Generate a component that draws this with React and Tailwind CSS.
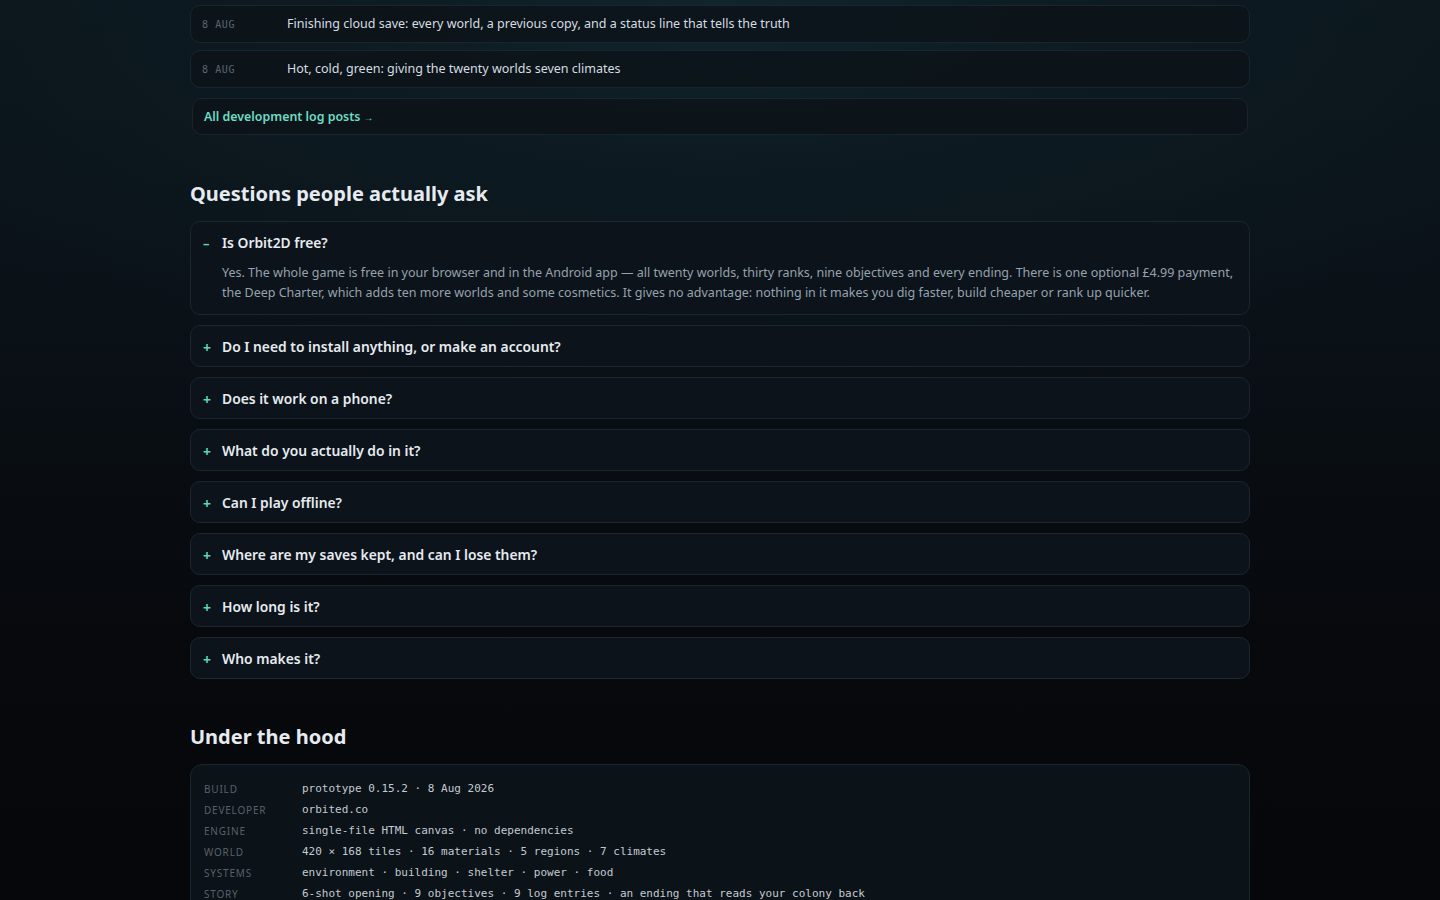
import React from "react";

const sans = { fontFamily: '"Noto Sans", "Open Sans", sans-serif' };

const logs = [
  "Finishing cloud save: every world, a previous copy, and a status line that tells the truth",
  "Hot, cold, green: giving the twenty worlds seven climates",
];

const faqs = [
  "Do I need to install anything, or make an account?",
  "Does it work on a phone?",
  "What do you actually do in it?",
  "Can I play offline?",
  "Where are my saves kept, and can I lose them?",
  "How long is it?",
  "Who makes it?",
];

const hood = [
  ["Build", "prototype 0.15.2 · 8 Aug 2026"],
  ["Developer", "orbited.co"],
  ["Engine", "single-file HTML canvas · no dependencies"],
  ["World", "420 × 168 tiles · 16 materials · 5 regions · 7 climates"],
  ["Systems", "environment · building · shelter · power · food"],
  ["Story", "6-shot opening · 9 objectives · 9 log entries · an ending that reads your colony back"],
];

export default function App() {
  return (
    <div
      className="h-screen w-full overflow-hidden bg-[radial-gradient(ellipse_70%_45%_at_50%_0%,#11252d_0%,#0d1a21_40%,transparent_100%),linear-gradient(180deg,#0b151b_0%,#0a1117_35%,#07090d_70%,#06070a_100%)]"
      style={sans}
    >
      <div className="mx-auto w-[1060px] pt-[5px]">
        <div className="flex flex-col gap-[7px]">
          {logs.map((t) => (
            <div
              key={t}
              className="flex h-[38px] items-center rounded-[10px] border border-[#19252e] bg-[#0c141a]/90 px-[11px]"
            >
              <span className="w-[85px] shrink-0 font-['DejaVu_Sans_Mono',monospace] text-[10px] tracking-[0.06em] text-[#5a6670]">
                8 AUG
              </span>
              <span className="text-[12.5px] text-[#d6dce2]">{t}</span>
            </div>
          ))}
        </div>
        <div className="mx-[2px] mt-[10px] flex h-[37px] items-center rounded-[10px] border border-[#19252e] bg-[#0c141a]/90 px-[11px] pt-[1px]">
          <span className="text-[12.4px] font-semibold text-[#6edcc4]">
            All development log posts <span className="text-[10px]">→</span>
          </span>
        </div>

        <h2 className="mt-[45px] mb-[13px] text-[20px] leading-[28px] font-bold text-[#e6ebf0]">
          Questions people actually ask
        </h2>
        <div className="flex flex-col gap-[10px]">
          <div className="rounded-[10px] border border-[#1b2630] bg-[#0c131a] px-[12px] pt-[11px] pb-[11px]">
            <div className="flex items-center leading-[20px]">
              <span className="w-[19px] shrink-0 text-[13px] font-bold text-[#5fd3bd]">–</span>
              <span className="text-[13.85px] font-semibold text-[#e6ebf0]">Is Orbit2D free?</span>
            </div>
            <p className="mt-[10px] pl-[19px] text-[12.5px] leading-[20px] text-[#96a2ae]">
              Yes. The whole game is free in your browser and in the Android app — all twenty worlds, thirty ranks, nine objectives and every ending. There is one optional £4.99 payment, the Deep Charter, which adds ten more worlds and some cosmetics. It gives no advantage: nothing in it makes you dig faster, build cheaper or rank up quicker.
            </p>
          </div>
          {faqs.map((q) => (
            <div
              key={q}
              className="flex h-[42px] items-center rounded-[10px] border border-[#1b2630] bg-[#0c131a] px-[12px] pt-[2px]"
            >
              <span className="w-[19px] shrink-0 text-[14px] font-bold text-[#5fd3bd]">+</span>
              <span className="text-[13.85px] leading-[20px] font-semibold text-[#e6ebf0]">{q}</span>
            </div>
          ))}
        </div>

        <h2 className="mt-[44px] mb-[13px] text-[20px] leading-[28px] font-bold text-[#e6ebf0]">
          Under the hood
        </h2>
        <div className="rounded-[12px] border border-[#1b2630] bg-[#0b1218] px-[13px] pt-[14px] pb-[14px]">
          {hood.map(([k, v]) => (
            <div key={k} className="flex h-[21px] items-center">
              <span className="w-[98px] shrink-0 text-[10px] uppercase tracking-[0.08em] text-[#58616a]">
                {k}
              </span>
              <span className="font-['DejaVu_Sans_Mono',monospace] text-[11px] text-[#c3cad1]">{v}</span>
            </div>
          ))}
        </div>
      </div>
    </div>
  );
}
